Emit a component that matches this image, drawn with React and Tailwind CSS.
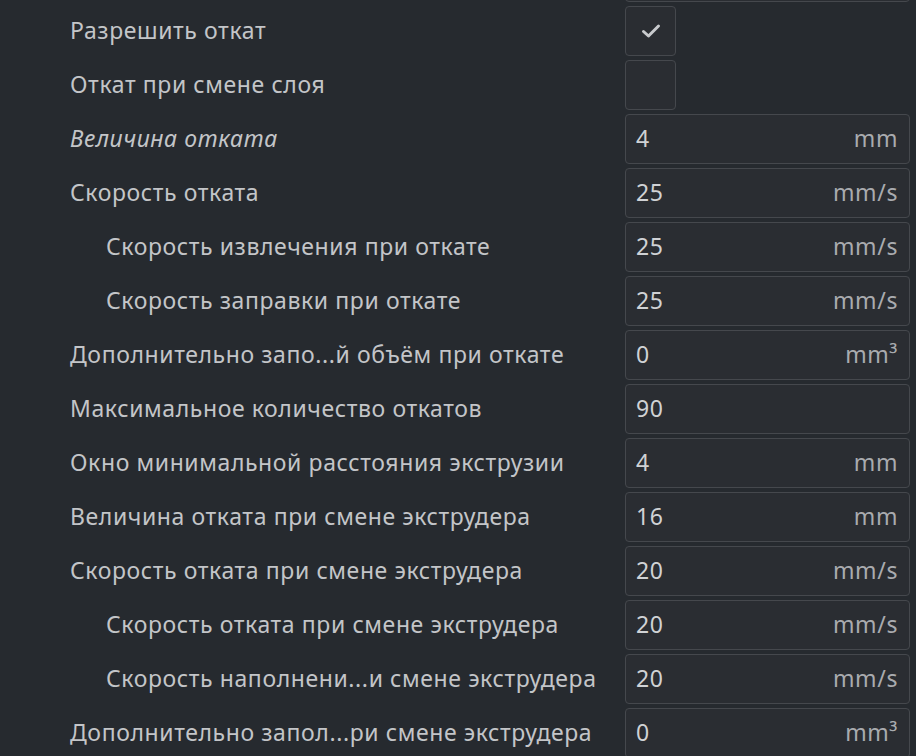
const rows = [
  { label: "", type: "field", value: "", unit: "" },
  { label: "Разрешить откат", type: "check", checked: true },
  { label: "Откат при смене слоя", type: "check", checked: false },
  { label: "Величина отката", type: "field", value: "4", unit: "mm", italic: true },
  { label: "Скорость отката", type: "field", value: "25", unit: "mm/s" },
  { label: "Скорость извлечения при откате", type: "field", value: "25", unit: "mm/s", indent: true },
  { label: "Скорость заправки при откате", type: "field", value: "25", unit: "mm/s", indent: true },
  { label: "Дополнительно запо...й объём при откате", type: "field", value: "0", unit: "mm³" },
  { label: "Максимальное количество откатов", type: "field", value: "90", unit: "" },
  { label: "Окно минимальной расстояния экструзии", type: "field", value: "4", unit: "mm" },
  { label: "Величина отката при смене экструдера", type: "field", value: "16", unit: "mm" },
  { label: "Скорость отката при смене экструдера", type: "field", value: "20", unit: "mm/s" },
  { label: "Скорость отката при смене экструдера", type: "field", value: "20", unit: "mm/s", indent: true },
  { label: "Скорость наполнени...и смене экструдера", type: "field", value: "20", unit: "mm/s", indent: true },
  { label: "Дополнительно запол...ри смене экструдера", type: "field", value: "0", unit: "mm³" },
];

function Check({ checked }) {
  return (
    <div className="w-[51px] h-[50px] rounded-[4px] border border-[#45484d] bg-[#2a2d32] flex items-center justify-center">
      {checked && (
        <svg width="20" height="16" viewBox="0 0 20 16">
          <path d="M2.5 8.5 L7.5 13 L17.5 3" fill="none" stroke="#c8cacd" strokeWidth="3" strokeLinecap="round" strokeLinejoin="round" />
        </svg>
      )}
    </div>
  );
}

function Field({ value, unit }) {
  return (
    <div className="w-[285px] h-[50px] rounded-[4px] border border-[#45484d] bg-[#2a2d32] flex items-center justify-between pl-[10px] pr-[11px] pb-[2px]">
      <span className="text-[#d0d2d5]">{value}</span>
      <span className="text-[#a9abaf]">{unit}</span>
    </div>
  );
}

export default function App() {
  return (
    <div
      className="w-[916px] h-[756px] overflow-hidden bg-[#262a2f] text-[23px] tracking-[0.6px] text-[#c3c5c8]"
      style={{ fontFamily: '"Noto Sans", "Open Sans", sans-serif' }}
    >
      <div className="-mt-[48px] flex flex-col gap-[4px]">
        {rows.map((r, i) => (
          <div key={i} className="flex items-center h-[50px]">
            <div className={`flex-1 min-w-0 whitespace-nowrap pb-[2px] ${r.indent ? "pl-[106px]" : "pl-[70px]"} ${r.italic ? "italic" : ""}`}>
              {r.label}
            </div>
            <div className="w-[291px] shrink-0">
              {r.type === "check" ? <Check checked={r.checked} /> : <Field value={r.value} unit={r.unit} />}
            </div>
          </div>
        ))}
      </div>
    </div>
  );
}
